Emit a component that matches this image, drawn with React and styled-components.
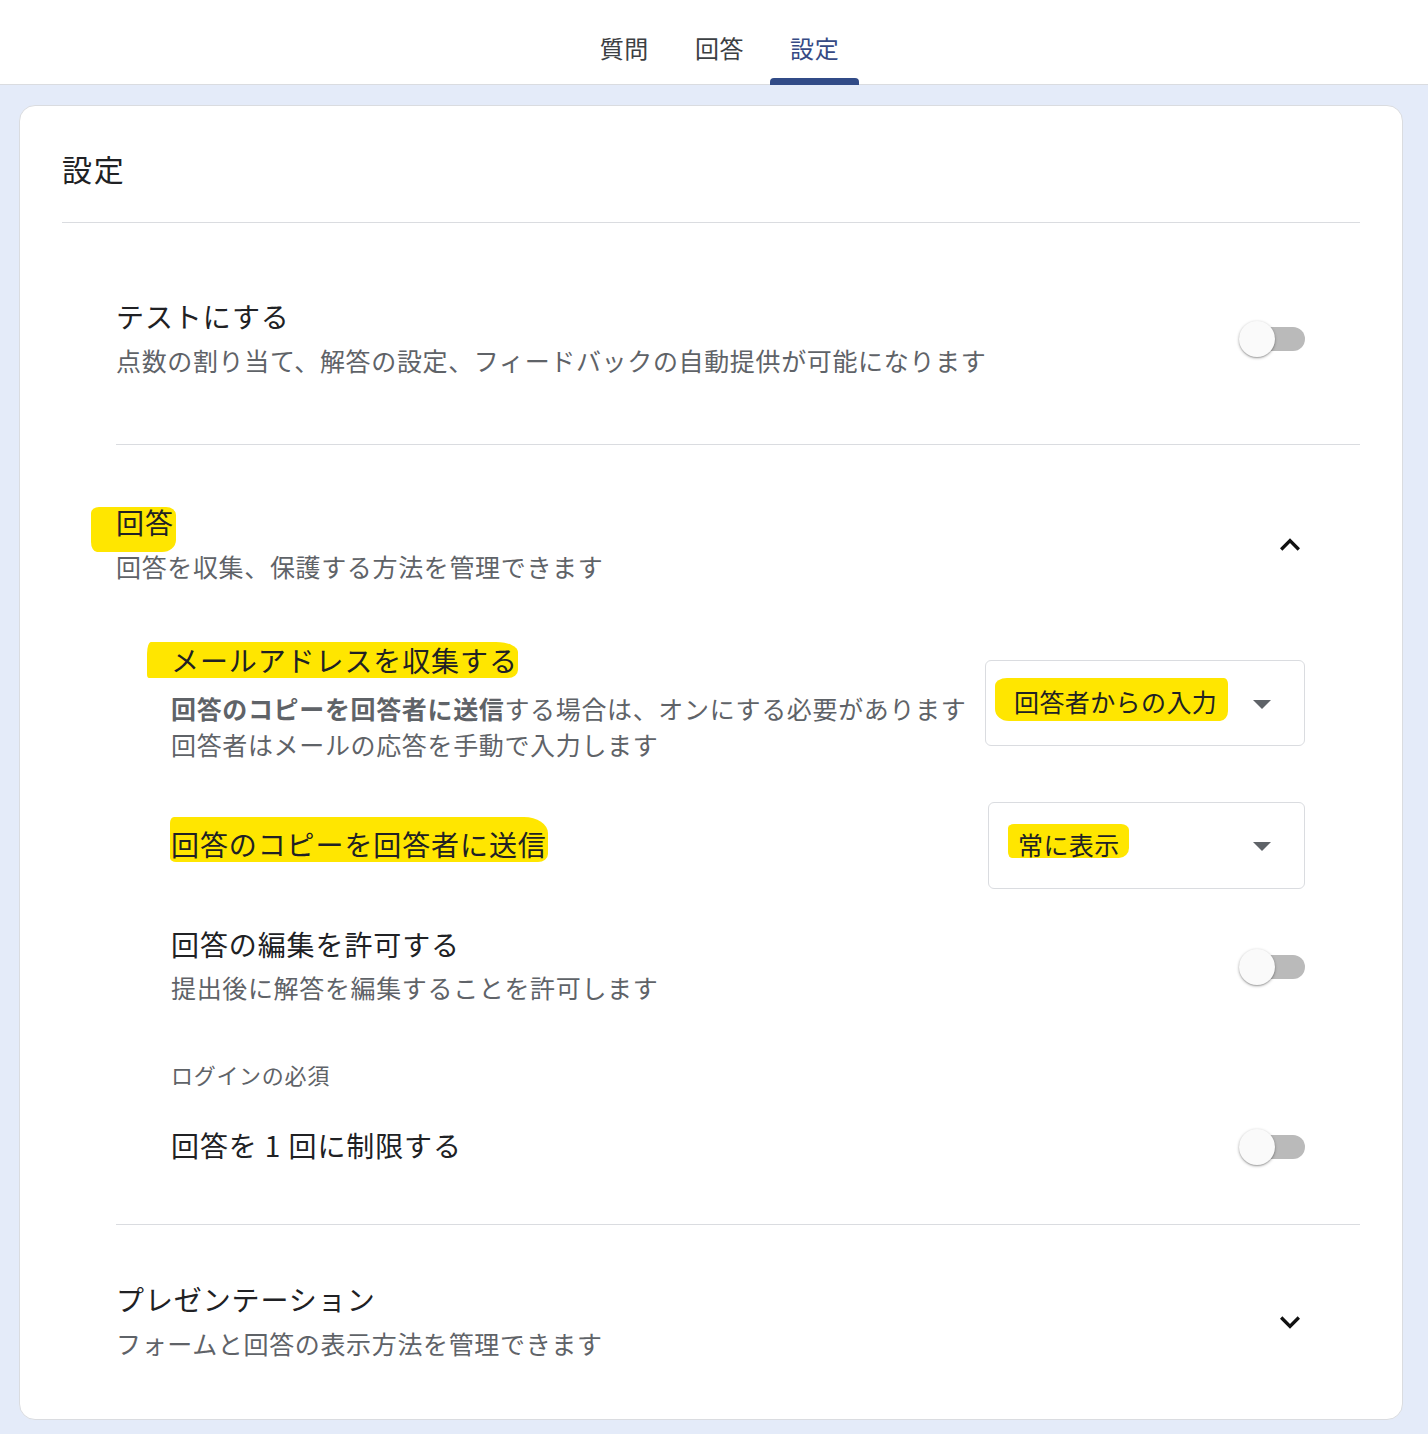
import React from 'react'
import styled, { createGlobalStyle } from 'styled-components'

const GlobalStyle = createGlobalStyle`
  body {
    margin: 0;
    background: #e4ebf9;
    font-family: "Noto Sans CJK JP", "Noto Sans", sans-serif;
    color: #202124;
  }
`

const App = () => (
  <>
    <GlobalStyle />
    <TopBar>
      <Tabs>
        <Tab>質問</Tab>
        <Tab>回答</Tab>
        <Tab $active>設定</Tab>
      </Tabs>
    </TopBar>
    <Page>
      <Card>
        <CardTitle>設定</CardTitle>
        <Sections>
          <Section>
            <SectionHead $top={75} $bottom={64}>
              <TextBlock>
                <Title>テストにする</Title>
                <Sub>点数の割り当て、解答の設定、フィードバックの自動提供が可能になります</Sub>
              </TextBlock>
              <Toggle />
            </SectionHead>
          </Section>

          <Section>
            <SectionHead $top={59} $bottom={0}>
              <TextBlock>
                <Title>
                  <Highlight $t={3} $r={-2} $b={-12} $l={-25}>回答</Highlight>
                </Title>
                <Sub>回答を収集、保護する方法を管理できます</Sub>
              </TextBlock>
              <Chevron dir="up" />
            </SectionHead>
            <SubList>
              <Row $mt={56}>
                <TextBlock>
                  <Title>
                    <Highlight
                      $t={0}
                      $r={0}
                      $b={0}
                      $l={-24}
                      $shape="4px 22px 10px 2px / 12px 10px 8px 4px"
                    >
                      メールアドレスを収集する
                    </Highlight>
                  </Title>
                  <Sub $mt={10}>
                    <b>回答のコピーを回答者に送信</b>する場合は、オンにする必要があります
                  </Sub>
                  <Sub $mt={0}>回答者はメールの応答を手動で入力します</Sub>
                </TextBlock>
                <Select $w={320} $h={86} $pl={28}>
                  <SelectText>
                    <Highlight $t={-5} $r={-11} $b={-2} $l={-19} $shape="12px 4px 8px 14px / 8px 6px 10px 12px">
                      回答者からの入力
                    </Highlight>
                  </SelectText>
                  <Caret />
                </Select>
              </Row>

              <Row $mt={38}>
                <Title>
                  <Highlight $t={-9} $r={-1} $b={0} $l={-1} $shape="4px 24px 10px 6px / 6px 16px 8px 4px">
                    回答のコピーを回答者に送信
                  </Highlight>
                </Title>
                <Select $w={317} $h={87} $pl={29}>
                  <SelectText>
                    <Highlight $t={-2} $r={-9} $b={4} $l={-10} $shape="6px 8px 10px 4px / 4px 6px 10px 6px">
                      常に表示
                    </Highlight>
                  </SelectText>
                  <Caret />
                </Select>
              </Row>

              <Row $mt={37}>
                <TextBlock>
                  <Title>回答の編集を許可する</Title>
                  <Sub $mt={5}>提出後に解答を編集することを許可します</Sub>
                </TextBlock>
                <Toggle />
              </Row>

              <GroupLabel>ログインの必須</GroupLabel>

              <Row $mt={36}>
                <Title>回答を 1 回に制限する</Title>
                <Toggle />
              </Row>
            </SubList>
          </Section>

          <Section $last>
            <SectionHead $top={56} $bottom={56}>
              <TextBlock>
                <Title>プレゼンテーション</Title>
                <Sub>フォームと回答の表示方法を管理できます</Sub>
              </TextBlock>
              <Chevron dir="down" />
            </SectionHead>
          </Section>
        </Sections>
      </Card>
    </Page>
  </>
)

const Toggle = () => (
  <SwitchWrap>
    <Track />
    <Thumb />
  </SwitchWrap>
)

const Chevron = ({ dir }) => (
  <ChevronIcon viewBox="0 0 24 24" width="40" height="40">
    {dir === 'up' ? (
      <path d="M12 8l-6 6 1.41 1.41L12 10.83l4.59 4.58L18 14z" />
    ) : (
      <path d="M16.59 8.59L12 13.17 7.41 8.59 6 10l6 6 6-6z" />
    )}
  </ChevronIcon>
)

export default App

const TopBar = styled.div`
  height: 85px;
  box-sizing: border-box;
  background: #fff;
  border-bottom: 1px solid #dadce0;
  display: flex;
  justify-content: center;
`

const Tabs = styled.div`
  display: flex;
  gap: 6px;
  margin-left: 11px;
`

const Tab = styled.div`
  position: relative;
  display: flex;
  align-items: center;
  padding: 11px 20px 0;
  font-size: 24px;
  letter-spacing: 0.6px;
  color: ${p => (p.$active ? '#364a84' : '#3c4043')};

  &::after {
    content: '';
    display: ${p => (p.$active ? 'block' : 'none')};
    position: absolute;
    left: 0;
    right: 0;
    bottom: -1px;
    height: 7px;
    background: #314b87;
    border-radius: 4px 4px 0 0;
  }
`

const Page = styled.div`
  padding: 20px 25px 14px 19px;
`

const Card = styled.div`
  background: #fff;
  border: 1px solid #dadce0;
  border-radius: 16px;
  padding: 0 42px;
`

const CardTitle = styled.div`
  padding: 42px 0 34px 0;
  font-size: 30px;
  line-height: 40px;
  letter-spacing: 1.8px;
  border-bottom: 1px solid #dadce0;
`

const Sections = styled.div`
  margin-left: 54px;
`

const Section = styled.div`
  border-bottom: ${p => (p.$last ? 'none' : '1px solid #dadce0')};
`

const SectionHead = styled.div`
  display: flex;
  align-items: center;
  justify-content: space-between;
  padding: ${p => p.$top}px 55px ${p => p.$bottom}px 0;
`

const TextBlock = styled.div`
  min-width: 0;
  white-space: nowrap;
`

const Title = styled.div`
  font-size: 28px;
  line-height: 36px;
  padding-bottom: 4px;
  letter-spacing: 0.9px;
  color: #202124;
  white-space: nowrap;
`

const Sub = styled.div`
  margin-top: ${p => (p.$mt === undefined ? 6 : p.$mt)}px;
  font-size: 25px;
  line-height: 32px;
  padding-bottom: 4px;
  letter-spacing: 0.65px;
  color: #5f6368;

  b {
    font-weight: 700;
  }
`

const SubList = styled.div`
  padding: 0 55px 57px 55px;
`

const Row = styled.div`
  display: flex;
  align-items: center;
  justify-content: space-between;
  gap: 16px;
  margin-top: ${p => p.$mt}px;
`

const GroupLabel = styled.div`
  margin-top: 54px;
  font-size: 22px;
  line-height: 26px;
  padding-bottom: 4px;
  letter-spacing: 0.7px;
  color: #5f6368;
`

const Select = styled.div`
  flex: none;
  box-sizing: border-box;
  width: ${p => p.$w}px;
  height: ${p => p.$h}px;
  border: 1px solid #dadce0;
  border-radius: 6px;
  display: flex;
  align-items: center;
  justify-content: space-between;
  padding: 0 33px 0 ${p => p.$pl}px;
`

const SelectText = styled.div`
  font-size: 25px;
  line-height: 36px;
  padding-bottom: 4px;
  letter-spacing: 0.4px;
  color: #202124;
`

const Caret = styled.span`
  width: 0;
  height: 0;
  margin-top: 2px;
  border-left: 9px solid transparent;
  border-right: 9px solid transparent;
  border-top: 9px solid #5f6368;
`

const Highlight = styled.span`
  position: relative;
  z-index: 0;
  display: inline-block;

  &::before {
    content: '';
    position: absolute;
    z-index: -1;
    top: ${p => p.$t}px;
    right: ${p => p.$r}px;
    bottom: ${p => p.$b}px;
    left: ${p => p.$l}px;
    background: #ffe600;
    border-radius: ${p => p.$shape || '8px 10px 14px 6px / 6px 8px 12px 10px'};
  }
`

const SwitchWrap = styled.div`
  position: relative;
  flex: none;
  width: 66px;
  height: 36px;
`

const Track = styled.div`
  position: absolute;
  right: 0;
  top: 6px;
  width: 58px;
  height: 24px;
  border-radius: 12px;
  background: #bababa;
`

const Thumb = styled.div`
  position: absolute;
  left: 0;
  top: 0;
  width: 36px;
  height: 36px;
  border-radius: 50%;
  background: #fafafa;
  box-shadow: 0 1px 3px rgba(0, 0, 0, 0.35), 0 1px 1px rgba(0, 0, 0, 0.12);
`

const ChevronIcon = styled.svg`
  flex: none;
  fill: #111;
  margin-right: -5px;
`
